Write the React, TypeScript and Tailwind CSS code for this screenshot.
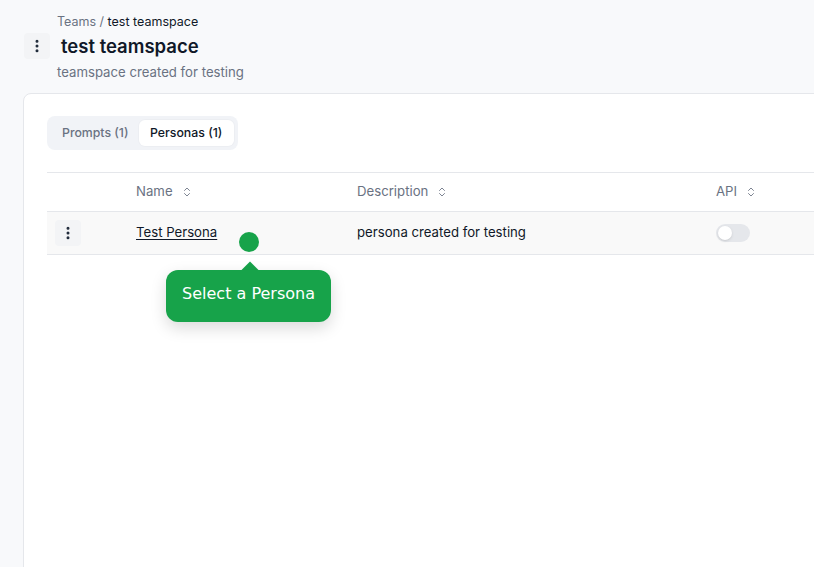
import { ChevronsUpDown, EllipsisVertical } from "lucide-react";

const COLS = "grid grid-cols-[73px_221px_359px_1fr]";

function Kebab() {
  return (
    <button className="flex h-[26px] w-[26px] items-center justify-center rounded bg-gray-100 text-gray-800">
      <EllipsisVertical size={16} strokeWidth={2.5} />
    </button>
  );
}

function SortHead({ label }: { label: string }) {
  return (
    <div className="flex items-center gap-2 text-gray-500">
      {label}
      <ChevronsUpDown size={12} strokeWidth={1.75} className="text-gray-500" />
    </div>
  );
}

export default function App() {
  return (
    <div
      className="relative h-[567px] w-[814px] overflow-hidden bg-[#f8f9fb] text-gray-900"
      style={{ fontFamily: "Inter, 'Liberation Sans', sans-serif" }}
    >
      {/* Header */}
      <div className="pt-[14px]">
        <div className="pl-[57px] text-[12.5px] leading-4 text-gray-500">
          Teams / <span className="text-gray-900">test teamspace</span>
        </div>
        <div className="mt-[3px] flex items-center gap-[11px] pl-[24px]">
          <Kebab />
          <h1 className="text-[18.5px] font-semibold leading-6">test teamspace</h1>
        </div>
        <p className="mt-[3px] pl-[57px] text-[13.2px] leading-5 text-gray-500">teamspace created for testing</p>
      </div>

      {/* Card */}
      <div className="ml-[23px] mt-[11px] h-[520px] w-[840px] rounded-lg border border-gray-200 bg-white px-[23px] pt-[22px]">
        <div className="inline-flex rounded-lg bg-[#f1f3f7] p-1 text-[12.3px] font-medium leading-[26px]">
          <div className="pl-[11px] pr-[10px] text-gray-500">Prompts (1)</div>
          <div className="rounded-md bg-white px-[11.5px] text-gray-900 shadow-[0_0_0_1px_rgba(0,0,0,0.02)]">Personas (1)</div>
        </div>

        <div className="mt-[22px] border-y border-gray-200 text-[13.2px]">
          <div className={`${COLS} h-[39px] items-center border-b border-gray-200`}>
            <div />
            <div className="pl-4">
              <SortHead label="Name" />
            </div>
            <div className="pl-4">
              <SortHead label="Description" />
            </div>
            <div className="pl-4">
              <SortHead label="API" />
            </div>
          </div>
          <div className={`${COLS} h-[42px] items-center bg-[#f9f9f9]`}>
            <div className="pl-2">
              <Kebab />
            </div>
            <div className="pl-4">
              <span className="text-gray-900 underline underline-offset-2">Test Persona</span>
            </div>
            <div className="pl-4 text-gray-900">persona created for testing</div>
            <div className="pl-4">
              <div className="flex h-[18px] w-[34px] items-center rounded-full bg-gray-200 px-[2px]">
                <div className="h-[14px] w-[14px] rounded-full bg-white shadow-sm" />
              </div>
            </div>
          </div>
        </div>
      </div>

      {/* Tour overlay */}
      <div className="absolute left-[239px] top-[232px] h-[20px] w-[20px] rounded-full bg-[#17a34a]" />
      <div className="absolute left-[166px] top-[270px]">
        <div className="absolute -top-[6px] left-[78px] h-[12px] w-[12px] rotate-45 bg-[#17a34a]" />
        <div
          className="relative flex h-[52px] w-[165px] items-center justify-center rounded-xl bg-[#17a34a] pb-[4px] text-[16px] text-white shadow-[0_6px_16px_rgba(0,0,0,0.15)]"
          style={{ fontFamily: "'DejaVu Sans', sans-serif" }}
        >
          Select a Persona
        </div>
      </div>
    </div>
  );
}
